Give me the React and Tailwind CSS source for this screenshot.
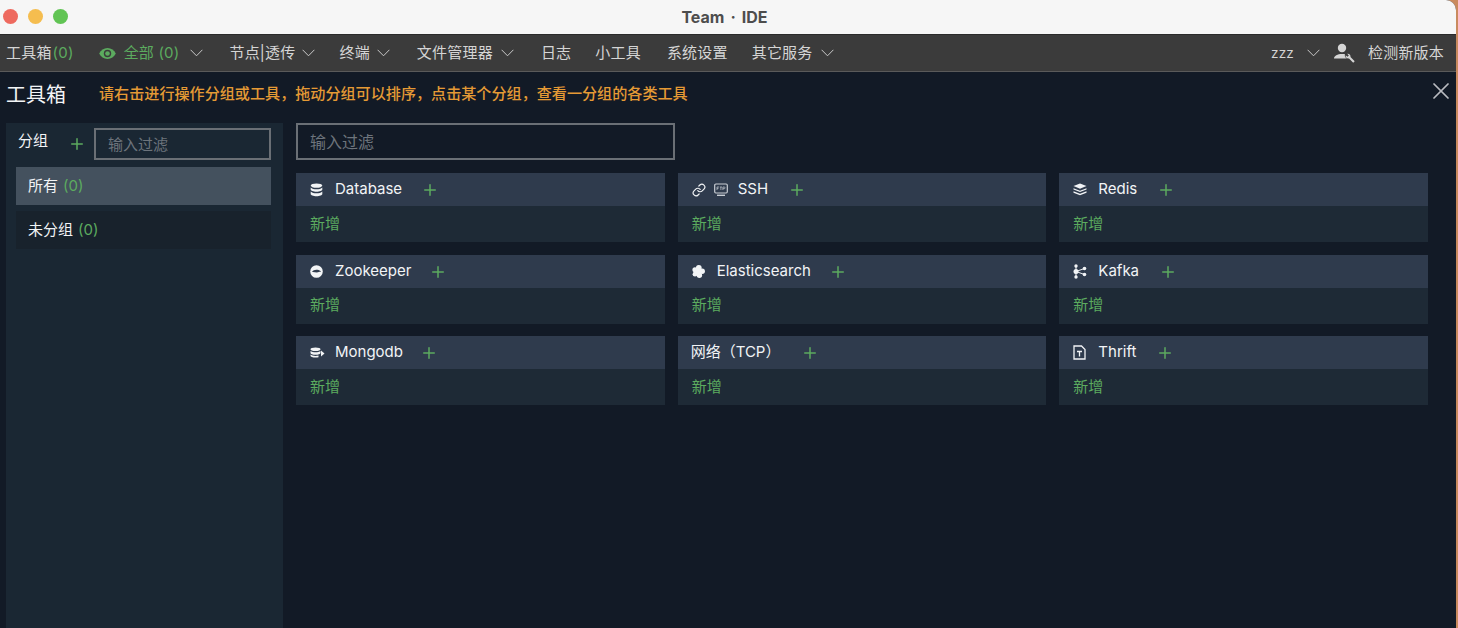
import React from 'react';
import { Plus, X, Link } from 'lucide-react';

const font = 'font-["Inter","Noto_Sans_CJK_SC",sans-serif]';

const Chevron = ({ className = '' }) => (
  <svg width="13" height="8" viewBox="0 0 13 8" fill="none" className={`shrink-0 ${className}`}>
    <path d="M.6 .8L6.500 6.800 12.400 .8" stroke="#c9c9c9" strokeWidth="1" />
  </svg>
);

const EyeIcon = () => (
  <svg width="17" height="11" viewBox="0 0 17 11" className="ml-[25px] shrink-0">
    <path d="M.2 5.500C1.800 2.200 4.900 0 8.500 0s6.700 2.200 8.300 5.500C15.200 8.800 12.100 11 8.500 11S1.800 8.800.2 5.500z" fill="#5cab5f" />
    <circle cx="8.500" cy="5.500" r="3.700" fill="#3b3b3b" />
    <circle cx="8.500" cy="5.500" r="2.300" fill="#5cab5f" />
  </svg>
);

const DbIcon = () => (
  <svg width="13" height="14" viewBox="0 0 13 14" fill="#f2f4f6">
    <ellipse cx="6.500" cy="2.600" rx="5.800" ry="2.200" />
    <path d="M.7 4.400c1 1.300 3.400 1.900 5.800 1.900s4.800-.6 5.800-1.900v2.200c0 1.200-2.600 2.200-5.800 2.200S.7 7.800.7 6.600z" />
    <path d="M.7 8.400c1 1.300 3.400 1.900 5.800 1.900s4.800-.6 5.800-1.900v2.600c0 1.200-2.600 2.200-5.800 2.200S.7 12.200.7 11z" />
  </svg>
);

const SshIcon = () => (
  <span className="flex items-center gap-[8px]">
    <Link size={14} strokeWidth={2} className="text-[#f2f4f6]" />
    <svg width="14" height="14" viewBox="0 0 14 14" fill="none">
      <rect x=".7" y="1" width="12.600" height="9" rx="1.200" stroke="#c9ced4" strokeWidth="1.200" />
      <rect x="3" y="11.600" width="8" height="1.400" fill="#c9ced4" />
      <path d="M3 4h2M3 4v3M3 5.400h1.500M5.800 4h2.200M6.900 4v3M8.900 7V4h1.300a.8.800 0 010 1.700H8.900" stroke="#c9ced4" strokeWidth=".7" />
    </svg>
  </span>
);

const RedisIcon = () => (
  <svg width="14" height="13" viewBox="0 0 14 13" fill="#f2f4f6">
    <path d="M7 .5l6.500 2.600L7 5.700.5 3.100z" />
    <path d="M.5 5.200L7 7.800l6.500-2.600v1.300L7 9.100.5 6.500z" />
    <path d="M.5 8.200L7 10.800l6.500-2.600v1.500L7 12.300.5 9.700z" />
  </svg>
);

const ZookeeperIcon = () => (
  <svg width="13" height="13" viewBox="0 0 13 13">
    <circle cx="6.500" cy="6.500" r="6.300" fill="#f2f4f6" />
    <path d="M2 7c1-2 3.500-2.600 5.500-2.200 1.500.3 3 1 3.600 2-1.500-.4-2.400.6-4.200.6C5 7.400 3.500 6.600 2 7z" fill="#2f3b4d" />
  </svg>
);

const ElasticIcon = () => (
  <svg width="13" height="13" viewBox="0 0 13 13" fill="#f2f4f6">
    <circle cx="6.800" cy="3" r="2.900" />
    <circle cx="2.900" cy="4.800" r="2.500" />
    <circle cx="10.200" cy="6.200" r="2.700" />
    <circle cx="6" cy="7" r="2.400" />
    <circle cx="3" cy="9.200" r="2.400" />
    <circle cx="7.400" cy="10.200" r="2.700" />
  </svg>
);

const KafkaIcon = () => (
  <svg width="14" height="15" viewBox="0 0 14 15" fill="#f2f4f6">
    <circle cx="3" cy="2" r="1.700" />
    <circle cx="3" cy="7.500" r="2.500" />
    <circle cx="3" cy="13" r="1.700" />
    <circle cx="11.500" cy="4.500" r="1.800" />
    <circle cx="11.500" cy="10.500" r="1.800" />
    <path d="M3 2v11M3 7.500l8.500-3M3 7.500l8.500 3" stroke="#f2f4f6" strokeWidth="1" />
  </svg>
);

const MongoIcon = () => (
  <svg width="15" height="12" viewBox="0 0 15 12" fill="#f2f4f6">
    <ellipse cx="5.500" cy="2.200" rx="5" ry="1.800" />
    <path d="M.5 3.900c1 .9 3 1.400 5 1.400s4-.5 5-1.400v2c0 1-2.200 1.800-5 1.800S.5 6.900.5 5.900z" />
    <path d="M.5 7.500c1 .9 3 1.400 5 1.400 1 0 2-.1 3-.4v1.700c-.9.200-1.900.3-3 .3-2.800 0-5-.8-5-1.800z" />
    <path d="M11 3.500l3.500 3L11 9.500z" />
  </svg>
);

const ThriftIcon = () => (
  <svg width="13" height="15" viewBox="0 0 13 15" fill="none">
    <path d="M1 1h7.500L12 4.500V14H1z" stroke="#f2f4f6" strokeWidth="1.300" />
    <path d="M4 6.500h5M6.500 6.500V11.500" stroke="#f2f4f6" strokeWidth="1.300" />
  </svg>
);

const UserWrench = () => (
  <svg width="21" height="20" viewBox="0 0 21 20" fill="#d5d5d5" className="ml-[14px] shrink-0">
    <circle cx="8" cy="5" r="4.200" />
    <path d="M0 15.500c0-2.800 3.500-4.600 8-4.600 1.100 0 2.200.1 3.100.3-.5 1-.3 2.300.5 3.200l1.300 1.100z" />
    <path d="M13.200 10.800a2.700 2.700 0 013.300 3.200l4.200 4.200-1.500 1.500-4.200-4.200a2.700 2.700 0 01-3.300-3.300l1.800 1.600 1.300-1.200z" />
  </svg>
);

const tools = [
  { name: 'Database', icon: <DbIcon />, plus: 'ml-[19px]', text: 'ml-[12px]' },
  { name: 'SSH', icon: <SshIcon />, plus: 'ml-[20px]', text: 'ml-[10px]' },
  { name: 'Redis', icon: <RedisIcon />, plus: 'ml-[19.5px]', text: 'ml-[11px]' },
  { name: 'Zookeeper', icon: <ZookeeperIcon />, plus: 'ml-[18px]', text: 'ml-[12px]' },
  { name: 'Elasticsearch', icon: <ElasticIcon />, plus: 'ml-[18.5px]', text: 'ml-[12px]' },
  { name: 'Kafka', icon: <KafkaIcon />, plus: 'ml-[19.5px]', text: 'ml-[11px]' },
  { name: 'Mongodb', icon: <MongoIcon />, plus: 'ml-[17.5px]', text: 'ml-[10px]' },
  { name: '网络（TCP）', plus: 'ml-[20.5px]', text: '-ml-[1px]' },
  { name: 'Thrift', icon: <ThriftIcon />, plus: 'ml-[19.5px]', text: 'ml-[12px]' },
];

const ToolCard = ({ tool }) => (
  <div>
    <div className="h-[33px] bg-[#2f3b4d] flex items-center pl-[14px] text-[15px] text-[#f2f4f6]">
      {tool.icon}
      <span className={tool.text}>{tool.name}</span>
      <Plus size={18} strokeWidth={2} className={`${tool.plus} text-[#5cab5f] mt-[1px]`} />
    </div>
    <div className="h-[36px] bg-[#1e2a36] flex items-center pl-[14px] text-[15px] text-[#5cab5f]">新增</div>
  </div>
);

const App = () => {
  return (
    <div className={`${font} relative w-[1458px] h-[628px] overflow-hidden bg-[#c98a5e]`}>
      <div className="w-[1456px] h-full rounded-tr-[10px] overflow-hidden flex flex-col bg-[#121a26]">
        {/* Title bar */}
        <div className="relative h-[34px] shrink-0 bg-[#f6f6f6] flex items-center justify-center pr-[7px] text-[16px] font-bold text-[#4d4d4d]">
          <div className="absolute left-[3px] top-[9px] flex gap-[10px]">
            <span className="w-[15px] h-[15px] rounded-full bg-[#ee6a5f]" />
            <span className="w-[15px] h-[15px] rounded-full bg-[#f5bd4f]" />
            <span className="w-[15px] h-[15px] rounded-full bg-[#61c454]" />
          </div>
          <span>Team</span><span className="mx-[6px]">·</span><span>IDE</span>
        </div>

        {/* Menu */}
        <div className="h-[38px] shrink-0 bg-[#3b3b3b] border-t border-t-[#2a2a2a] border-b border-b-[#5a5a5a] flex items-center pl-[6px] pr-[12px] text-[15px] tracking-[0.2px] text-[#d5d5d5]">
          <span>工具箱<span className="ml-[1px] text-[#5cab5f]">(0)</span></span>
          <EyeIcon />
          <span className="ml-[8px] text-[#5cab5f]">全部 (0)</span>
          <Chevron className="ml-[11px]" />
          <span className="ml-[26px]">节点|透传</span>
          <Chevron className="ml-[7px]" />
          <span className="ml-[24px]">终端</span>
          <Chevron className="ml-[7px]" />
          <span className="ml-[27px]">文件管理器</span>
          <Chevron className="ml-[8px]" />
          <span className="ml-[27px]">日志</span>
          <span className="ml-[24px]">小工具</span>
          <span className="ml-[26px]">系统设置</span>
          <span className="ml-[24px]">其它服务</span>
          <Chevron className="ml-[8px]" />
          <span className="ml-auto text-[13.500px]">zzz</span>
          <Chevron className="ml-[13px]" />
          <UserWrench />
          <span className="ml-[13px]">检测新版本</span>
        </div>

        {/* Page head */}
        <div className="relative h-[51px] shrink-0 flex items-center pl-[6px] pb-[6px]">
          <span className="text-[20px] text-[#f2f4f6]">工具箱</span>
          <span className="ml-[33px] text-[15.100px] font-medium text-[#e59a35]">请右击进行操作分组或工具，拖动分组可以排序，点击某个分组，查看一分组的各类工具</span>
          <X size={28} strokeWidth={1.500} className="absolute right-[1px] top-[5px] text-[#b9bcc0]" />
        </div>

        {/* Content */}
        <div className="flex-1 flex pl-[6px]">
          <aside className="w-[277px] shrink-0 bg-[#1a2733] pl-[10px] pr-[12px] pt-[5px]">
            <div className="flex items-center">
              <span className="ml-[2px] text-[15px] text-[#f2f4f6] -mt-[5px]">分组</span>
              <Plus size={18} strokeWidth={2} className="ml-[20px] text-[#5cab5f]" />
              <input
                placeholder="输入过滤"
                className="ml-[8px] w-[177px] h-[32px] bg-transparent border-2 border-[#6a6f75] px-[12px] text-[15px] outline-none placeholder:text-[#6d747c]"
              />
            </div>
            <div className="mt-[7px] h-[38px] bg-[#44515e] flex items-center pl-[12px] text-[15px] text-[#f2f4f6]">
              所有<span className="ml-[5px] text-[#5cab5f]">(0)</span>
            </div>
            <div className="mt-[6px] h-[38px] bg-[#18222c] flex items-center pl-[12px] text-[15px] text-[#f2f4f6]">
              未分组<span className="ml-[5px] text-[#5cab5f]">(0)</span>
            </div>
          </aside>

          <main className="w-[1132px] ml-[13px]">
            <input
              placeholder="输入过滤"
              className="block w-[379px] h-[37px] bg-transparent border-2 border-[#6a6f75] px-[12px] text-[16px] outline-none placeholder:text-[#6d747c]"
            />
            <div className="mt-[13px] grid grid-cols-3 gap-x-[13px] gap-y-[12.500px]">
              {tools.map(t => <ToolCard key={t.name} tool={t} />)}
            </div>
          </main>
        </div>
      </div>
    </div>
  );
};

export default App;
